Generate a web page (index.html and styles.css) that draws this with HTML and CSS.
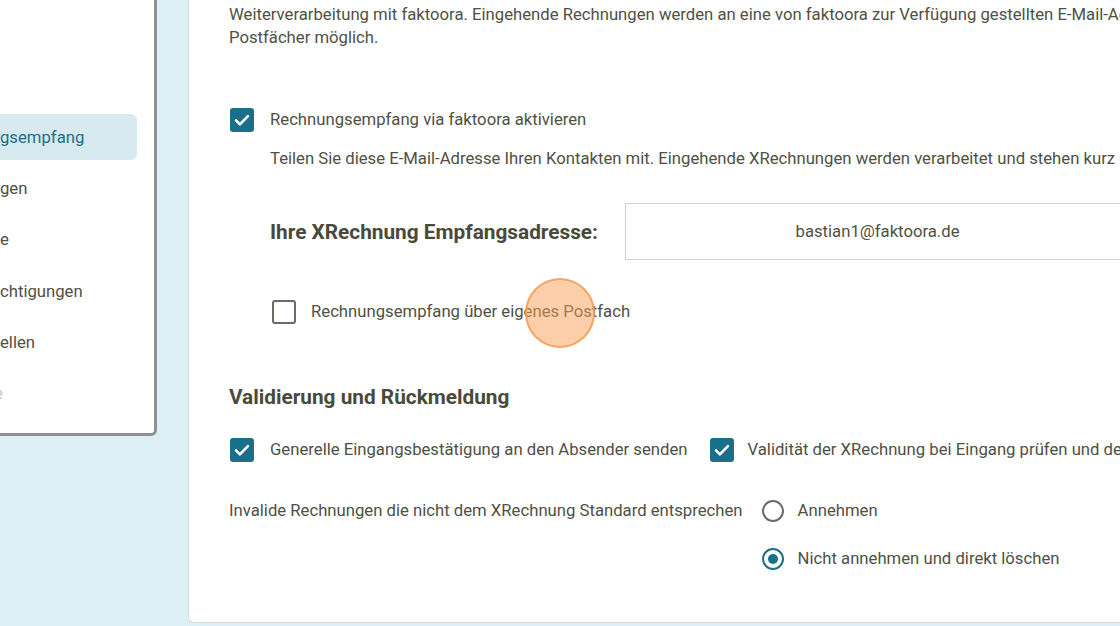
FILE: index.html
```html
<!DOCTYPE html>
<html lang="de">
<head>
<meta charset="utf-8">
<link rel="stylesheet" href="styles.css">
</head>
<body>
<div class="page">
  <aside class="side">
    <nav class="card">
      <div class="item active">gsempfang</div>
      <div class="item">gen</div>
      <div class="item">e</div>
      <div class="item">chtigungen</div>
      <div class="item">ellen</div>
      <div class="item faint">e</div>
    </nav>
  </aside>
  <main class="panel">
    <p class="intro">Weiterverarbeitung mit faktoora. Eingehende Rechnungen werden an eine von faktoora zur Verfügung gestellten E-Mail-Adresse gesendet.<br>Postfächer möglich.</p>

    <div class="row r1">
      <span class="cb on"><svg viewBox="0 0 24 24"><path d="M5.5 12.5l4.2 4.2 8.8-9" /></svg></span>
      <span class="lbl">Rechnungsempfang via faktoora aktivieren</span>
    </div>
    <p class="hint">Teilen Sie diese E-Mail-Adresse Ihren Kontakten mit. Eingehende XRechnungen werden verarbeitet und stehen kurz darauf zur Verfügung.</p>

    <div class="addr">
      <h3 class="addr-label">Ihre XRechnung Empfangsadresse:</h3>
      <div class="addr-box">bastian1@faktoora.de</div>
    </div>

    <div class="row r2">
      <span class="cb off"></span>
      <span class="lbl">Rechnungsempfang über eigenes Postfach</span>
    </div>

    <h2 class="section">Validierung und Rückmeldung</h2>

    <div class="row r3">
      <span class="cb on"><svg viewBox="0 0 24 24"><path d="M5.5 12.5l4.2 4.2 8.8-9" /></svg></span>
      <span class="lbl">Generelle Eingangsbestätigung an den Absender senden</span>
      <span class="cb on second"><svg viewBox="0 0 24 24"><path d="M5.5 12.5l4.2 4.2 8.8-9" /></svg></span>
      <span class="lbl">Validität der XRechnung bei Eingang prüfen und den Absender informieren</span>
    </div>

    <div class="invalid">
      <span class="inv-text">Invalide Rechnungen die nicht dem XRechnung Standard entsprechen</span>
      <div class="radios">
        <div class="radio-row"><span class="rb"></span><span class="lbl">Annehmen</span></div>
        <div class="radio-row"><span class="rb sel"></span><span class="lbl">Nicht annehmen und direkt löschen</span></div>
      </div>
    </div>

    <div class="click"></div>
  </main>
</div>
</body>
</html>
```
FILE: styles.css
```css
* { box-sizing: border-box; }
html, body { margin: 0; padding: 0; }
body {
  width: 1120px;
  height: 626px;
  overflow: hidden;
  background: #dfeff6;
  font-family: Roboto, "Noto Sans", sans-serif;
  color: #505045;
  font-size: 16.7px;
}
.page {
  display: flex;
  height: 626px;
}
.side {
  width: 188px;
  flex: none;
}
.card {
  width: 157px;
  height: 436px;
  background: #fff;
  border-right: 3px solid #8d9295;
  border-bottom: 3px solid #8d9295;
  border-bottom-right-radius: 6px;
  padding-top: 114px;
  display: flex;
  flex-direction: column;
  gap: 5.4px;
}
.item {
  height: 46px;
  width: 137px;
  display: flex;
  align-items: center;
  color: #505045;
  white-space: nowrap;
}
.item.active {
  background: #d6eaf0;
  color: #1e6f87;
  border-radius: 0 6px 6px 0;
}
.item.faint {
  margin-left: -6px;
  color: #c4c4be;
}
.panel {
  position: relative;
  flex: 1;
  height: 623px;
  background: #fff;
  border-left: 1px solid #d3dee3;
  border-bottom: 1px solid #d3dee3;
  border-bottom-left-radius: 6px;
  padding-left: 40px;
  overflow: hidden;
  white-space: nowrap;
}
.intro {
  margin: 3px 0 0;
  line-height: 23px;
}
.row {
  display: flex;
  align-items: center;
  height: 24px;
}
.lbl { line-height: 24px; }
.r1 { margin-top: 59px; margin-left: 1px; }
.cb {
  width: 24px;
  height: 24px;
  border-radius: 3px;
  flex: none;
  margin-right: 16px;
  display: flex;
  align-items: center;
  justify-content: center;
}
.cb.on { background: #1b7089; }
.cb svg { width: 22px; height: 22px; }
.cb svg path {
  fill: none;
  stroke: #fff;
  stroke-width: 2.8;
  stroke-linecap: round;
  stroke-linejoin: round;
}
.cb.off {
  border: 2.5px solid #6b6b66;
  margin-right: 15px;
}
.hint {
  margin: 15px 0 0 41px;
  line-height: 23px;
}
.addr {
  display: flex;
  align-items: center;
  margin-top: 33px;
  margin-left: 41px;
  height: 57px;
}
.addr-label {
  margin: 0;
  width: 355px;
  flex: none;
  font-size: 20.8px;
  font-weight: 700;
  color: #4a4a3a;
}
.addr-box {
  width: 505px;
  height: 57px;
  flex: none;
  border: 1px solid #cfcfcf;
  display: flex;
  align-items: center;
  justify-content: center;
}
.r2 { margin-top: 40px; margin-left: 43px; }
.section {
  margin: 60px 0 0;
  font-size: 20.8px;
  font-weight: 700;
  line-height: 26px;
  color: #4a4a3a;
}
.r3 { margin-top: 28px; margin-left: 1px; }
.cb.second { margin-left: 22px; margin-right: 14px; }
.invalid {
  display: flex;
  align-items: flex-start;
  margin-top: 38px;
}
.inv-text {
  line-height: 24px;
  margin-top: -1px;
  margin-right: 19px;
}
.radios {
  display: flex;
  flex-direction: column;
  gap: 26px;
}
.radio-row {
  display: flex;
  align-items: center;
  height: 22px;
}
.rb {
  width: 22px;
  height: 22px;
  border: 2px solid #6b6b66;
  border-radius: 50%;
  flex: none;
  margin-right: 14px;
  display: flex;
  align-items: center;
  justify-content: center;
}
.rb.sel { border-color: #1b7089; }
.rb.sel::after {
  content: "";
  width: 10px;
  height: 10px;
  border-radius: 50%;
  background: #1b7089;
}
.click {
  position: absolute;
  left: 336px;
  top: 278px;
  width: 70px;
  height: 70px;
  border-radius: 50%;
  background: rgba(250, 160, 85, 0.5);
  border: 2px solid rgba(245, 160, 90, 0.9);
}
```
